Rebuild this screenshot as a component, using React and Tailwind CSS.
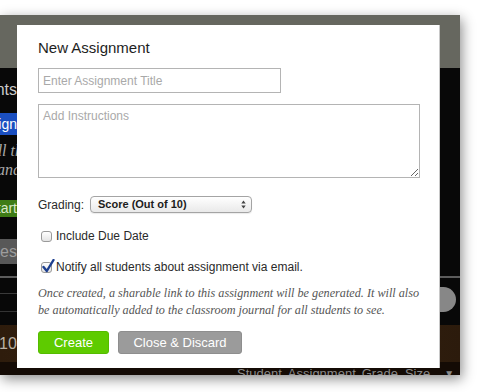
import React from 'react'

const sans = { fontFamily: '"Liberation Sans", Arial, sans-serif' }
const serif = { fontFamily: '"Liberation Serif", "Times New Roman", serif' }

function Checkbox({ checked }) {
  return (
    <div className="relative w-[11px] h-[11px] ml-[3px] mr-[4px] shrink-0 rounded-[3px] border border-[#9a9a9a] bg-gradient-to-b from-white to-[#e4e4e4]">
      {checked && (
        <svg className="absolute left-[0px] top-[-4px]" width="13" height="14" viewBox="0 0 13 14">
          <path d="M1.5 8 L4.8 12 L11.5 1" fill="none" stroke="#1d3f8f" strokeWidth="2.4" strokeLinecap="round" strokeLinejoin="round" />
        </svg>
      )}
    </div>
  )
}

function LeftStrip() {
  return (
    <div className="w-[17px] shrink-0 flex flex-col" style={sans}>
      <div className="h-[12px]" />
      <div className="h-[20px] flex justify-end items-center overflow-hidden whitespace-nowrap text-[16px] text-[#c9c9c9]">Assignments</div>
      <div className="h-[13px]" />
      <div className="h-[22px] flex justify-end items-center overflow-hidden whitespace-nowrap bg-[#1b4fc0] text-[14px] text-white">Assign</div>
      <div className="h-[6px]" />
      <div className="flex flex-col text-[16px] italic text-[#a8a8a8]" style={serif}>
        <div className="h-[19px] flex justify-end items-center overflow-hidden whitespace-nowrap -mr-[6px]">Start all th</div>
        <div className="h-[20px] flex justify-end items-center overflow-hidden whitespace-nowrap -mr-[4px]">and</div>
      </div>
      <div className="h-[20px]" />
      <div className="h-[17px] flex justify-end items-center overflow-hidden whitespace-nowrap bg-[#3e7c16] text-[14px] text-[#d8e8c8]">Start</div>
      <div className="h-[22px]" />
      <div className="h-[25px] flex justify-end items-center overflow-hidden whitespace-nowrap bg-[#585858] text-[16px] text-[#9d9d9d]">Categories</div>
      <div className="h-[12px]" />
      <div className="h-[2px] bg-[#5c5c5c]" />
      <div className="h-[15px]" />
      <div className="h-[1px] bg-[#3a3a3a]" />
      <div className="h-[17px]" />
      <div className="h-[1px] bg-[#333]" />
    </div>
  )
}

function RightStrip() {
  return (
    <div className="w-[20px] shrink-0 flex flex-col">
      <div className="h-[208px]" />
      <div className="h-[2px] bg-[#5c5c5c]" />
      <div className="h-[9px]" />
      <div className="h-[25px] w-[16px] rounded-r-full bg-[#878787]" />
    </div>
  )
}

export default function App() {
  return (
    <div className="w-[481px] h-[392px] bg-white overflow-hidden pt-[15px]">
      <div className="relative w-[460px] h-[360px] bg-[#080808] flex flex-col overflow-hidden shadow-[2px_4px_12px_rgba(0,0,0,0.45)]">
        {/* page behind the dialog */}
        <div className="h-[53px] bg-[#66675f] shrink-0" />
        <div className="h-[257px] flex shrink-0">
          <LeftStrip />
          <div className="flex-1" />
          <RightStrip />
        </div>
        <div className="h-[37px] shrink-0 flex items-center bg-gradient-to-r from-[#2e1c0c] via-[#3a2512] to-[#2c1b0c]" style={sans}>
          <span className="text-[16px] text-[#b9b0a4] -ml-[1px]">104</span>
        </div>
        <div className="h-[13px] shrink-0 bg-[#140b05] overflow-hidden" style={sans}>
          <div className="flex text-[13px] leading-[16px] text-[#8a8a8a] pt-[4px] whitespace-nowrap">
            <span className="ml-[237px]">Student</span>
            <span className="ml-[6px]">Assignment</span>
            <span className="ml-[6px]">Grade</span>
            <span className="ml-[7px]">Size</span>
            <span className="ml-[14px] text-[10px]">▼</span>
          </div>
        </div>

        {/* dialog */}
        <div className="absolute left-[17px] top-[10px] w-[423px] h-[343px] bg-white border-r border-[#c8c8c8] pl-[21px] pt-[14px] flex flex-col" style={sans}>
          <h2 className="text-[15px] leading-[18px] text-[#1e1e1e]">New Assignment</h2>
          <input
            className="mt-[11px] w-[243px] h-[25px] border border-[#b4b4b4] px-[4px] text-[12px] text-[#333] outline-none placeholder:text-[#a9a9a9]"
            placeholder="Enter Assignment Title"
            style={sans}
          />
          <textarea
            className="mt-[11px] w-[382px] h-[74px] border border-[#b4b4b4] px-[4px] py-[3px] text-[12px] leading-[16px] text-[#333] outline-none placeholder:text-[#a9a9a9]"
            placeholder="Add Instructions"
            style={sans}
          />
          <div className="mt-[18px] h-[17px] flex items-center">
            <span className="w-[52px] text-[12px] text-[#2a2a2a]">Grading:</span>
            <div className="w-[162px] h-[17px] flex items-center justify-between rounded-[4px] border border-[#a4a4a4] bg-gradient-to-b from-white to-[#e9e9e9] pl-[7px] pr-[5px] shadow-[0_1px_1px_rgba(0,0,0,0.08)]">
              <span className="text-[11px] font-bold text-[#1c1c1c]">Score (Out of 10)</span>
              <svg width="5" height="9" viewBox="0 0 5 9">
                <path d="M0.3 3.6 L2.5 0.6 L4.7 3.6 Z" fill="#444" />
                <path d="M0.3 5.4 L2.5 8.4 L4.7 5.4 Z" fill="#444" />
              </svg>
            </div>
          </div>
          <div className="mt-[15px] h-[16px] flex items-center">
            <Checkbox />
            <span className="text-[12px] text-[#2a2a2a]">Include Due Date</span>
          </div>
          <div className="mt-[15px] h-[16px] flex items-center">
            <Checkbox checked />
            <span className="text-[12px] text-[#2a2a2a]">Notify all students about assignment via email.</span>
          </div>
          <p className="mt-[10px] text-[12.2px] leading-[17px] italic text-[#555] whitespace-nowrap" style={serif}>
            Once created, a sharable link to this assignment will be generated. It will also
            <br />
            be automatically added to the classroom journal for all students to see.
          </p>
          <div className="mt-[12px] flex gap-[9px]">
            <button className="w-[71px] h-[23px] rounded-[3px] bg-[#5ecb00] border border-[#55bb00] text-[13px] text-white" style={sans}>Create</button>
            <button className="w-[124px] h-[23px] rounded-[3px] bg-[#9b9b9b] border border-[#8e8e8e] text-[13px] text-white" style={sans}>Close &amp; Discard</button>
          </div>
        </div>
      </div>
    </div>
  )
}
